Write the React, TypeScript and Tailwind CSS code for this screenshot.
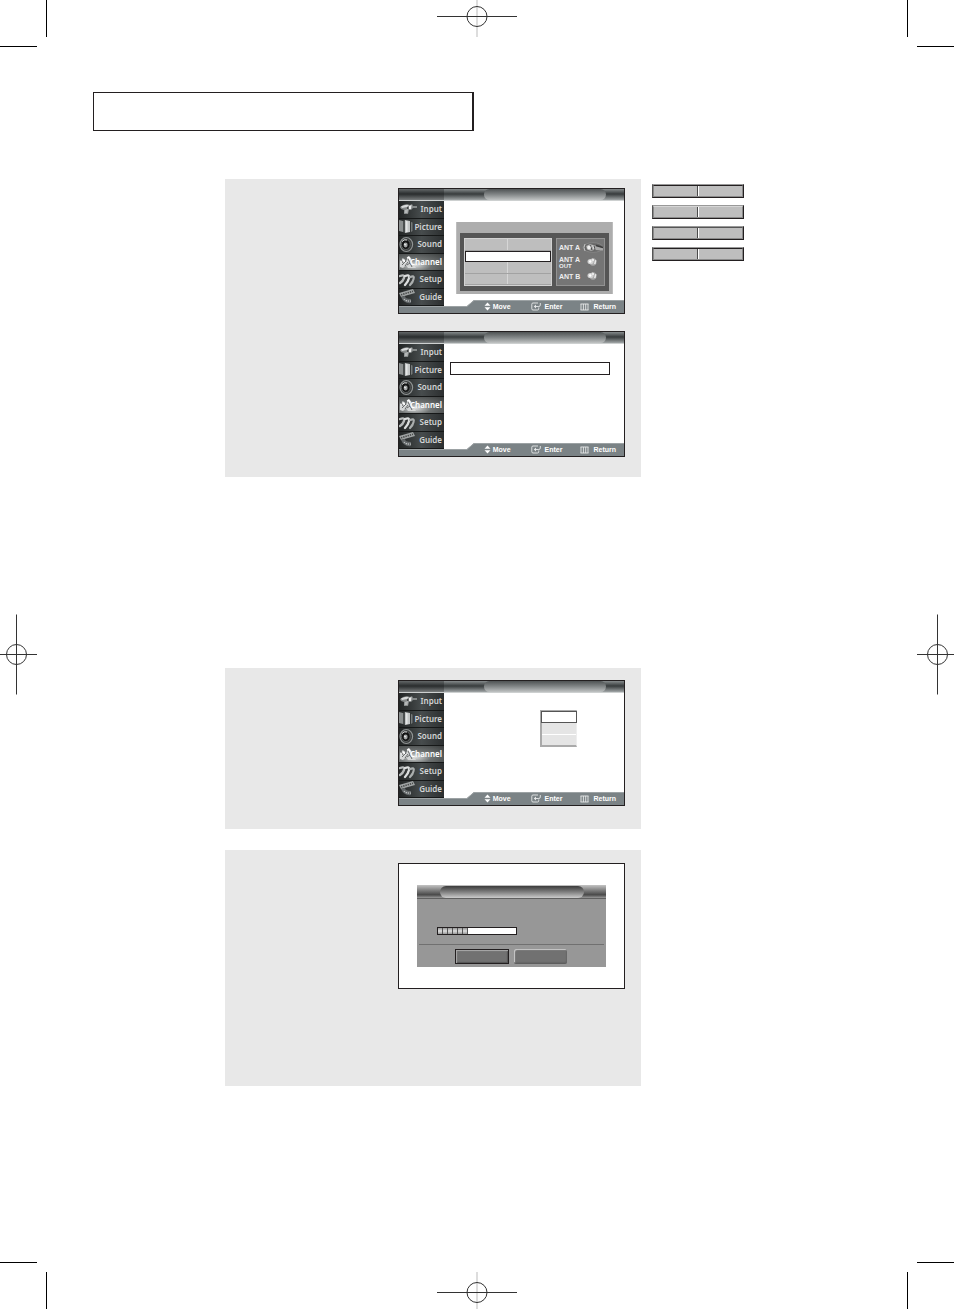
import type { ReactNode } from "react";
import clsx from "clsx";

const menu = ["Input", "Picture", "Sound", "Channel", "Setup", "Guide"];

function MenuIcon({ name }: { name: string }) {
  switch (name) {
    case "Input":
      return (
        <svg width="20" height="17" viewBox="0 0 20 17" className="shrink-0">
          <path d="M1 6 L4 4 L8 3 L11 4 L13 3 L14 5 L18 5 L18 7 L14 7 L12 9 L10 9 L9 13 L5 13 L5 9 L2 8 Z" fill="#858989" />
          <path d="M2 5.5 L6 4 L10 4 L8 6 L3 7 Z" fill="#d8dada" />
          <path d="M6 9 L9 8 L8.5 12 L5.5 12 Z" fill="#b4b7b7" />
          <path d="M10 5 L12.5 4 L12 8 L10 8 Z" fill="#eceded" />
          <path d="M8 6 L10 7 L8 8 Z" fill="#2c2e2e" />
        </svg>
      );
    case "Picture":
      return (
        <svg width="20" height="17" viewBox="0 0 20 17" className="shrink-0">
          <path d="M0 2 L4 3 L4 14 L0 13 Z" fill="#8b8f8f" />
          <path d="M4 3 L6 2 L6 15 L4 14 Z" fill="#4c5050" />
          <path d="M6 2 L11 3 L11 14 L6 15 Z" fill="#c3c6c6" />
          <path d="M7 3 L8.5 3.3 L8.5 14 L7 14.3 Z" fill="#e4e6e6" />
          <path d="M12 4 L13.5 4.5 V13 L12 14 Z" fill="#767a7a" />
        </svg>
      );
    case "Sound":
      return (
        <svg width="20" height="17" viewBox="0 0 20 17" className="shrink-0">
          <ellipse cx="7.3" cy="8.5" rx="6.3" ry="7" fill="#3a3d3d" stroke="#8f9393" strokeWidth="1.2" />
          <ellipse cx="6.8" cy="8.5" rx="4.4" ry="5" fill="#131414" stroke="#5e6262" strokeWidth="1" />
          <ellipse cx="6.6" cy="9" rx="2" ry="2.4" fill="#a2a5a5" />
          <path d="M3 5.5 Q5 3 8 4" stroke="#d5d7d7" strokeWidth="1" fill="none" />
          <path d="M5 8 L7 9" stroke="#f0f1f1" strokeWidth="1" />
        </svg>
      );
    case "Channel":
      return (
        <svg width="20" height="17" viewBox="0 0 20 17" className="shrink-0">
          <path d="M1 8 L4 5 L7 9 L9 3 L12 5 L13 9 L17 15 L9 15 L7 12 L4 15 L1 14 Z" fill="#d5d7d7" />
          <path d="M2 9 L5 7 L6 10 M8 5 L10 4 L11 7" stroke="#fff" strokeWidth="1.2" fill="none" />
          <path d="M3 12 L7 8 M9 6 L13 14 M6 13 L9 9 M2 6 L4 10 M11 10 L8 12" stroke="#4b4e4e" strokeWidth=".8" />
        </svg>
      );
    case "Setup":
      return (
        <svg width="20" height="17" viewBox="0 0 20 17" className="shrink-0">
          <g fill="none" strokeLinecap="round">
            <path d="M1 5 Q6 3 5 7 Q4 10 1 12" stroke="#b8bbbb" strokeWidth="2.4" />
            <path d="M6 5 Q11 3 10 7 Q9 11 6 14" stroke="#dcdede" strokeWidth="2.4" />
            <path d="M11 6 Q16 4 14.5 8 Q14 11 11 14" stroke="#aaaeae" strokeWidth="2.2" />
            <path d="M3 7 L1 10 M8 7 L6 11 M13 8 L11 11" stroke="#3d4040" strokeWidth=".9" />
          </g>
        </svg>
      );
    default:
      return (
        <svg width="20" height="17" viewBox="0 0 20 17" className="shrink-0">
          <path d="M0 5 L14 1 L16 5 L2 9 Z" fill="#a0a4a4" />
          <path d="M2 6.8 L14 3.2" stroke="#484b4b" strokeWidth="1.6" strokeDasharray="1.4 .9" />
          <path d="M2 9 L6 8 Q6 11 12 11 L12 15 Q5 16 2 9 Z" fill="#63686a" />
          <path d="M5 11 Q7 13.5 12 13" stroke="#c2c5c5" strokeWidth="1.2" strokeDasharray="1.3 .9" fill="none" />
        </svg>
      );
  }
}

function TitleBar() {
  return (
    <div className="flex h-3 shrink-0 border-b border-[#cdd0d0] bg-linear-to-b from-[#7d8283] from-5% via-[#383c3d] via-45% to-[#a2a7a8]">
      <div className="w-[45px] shrink-0 bg-black/25" />
      <div className="ml-10 h-[11px] w-[122px] rounded-full bg-linear-to-b from-[#4f5354] via-[#838788] to-[#c0c3c3]" />
    </div>
  );
}

function Hints() {
  return (
    <div className="absolute inset-x-0 bottom-0 h-[13px] font-['Liberation_Sans',sans-serif] text-[7px] font-bold leading-[13px] text-white">
      <svg className="absolute inset-0 h-full w-full" viewBox="0 0 225 13" preserveAspectRatio="none">
        <path d="M0 6 H68 L75 0 H225 V13 H0 Z" fill="#7b8386" />
        <path d="M0 6.5 H68 L75 .5 H225" stroke="#9ca2a4" fill="none" />
      </svg>
      <div className="relative flex items-center justify-end pr-2">
        <span className="flex items-center gap-0.5">
          <svg width="7" height="9" viewBox="0 0 7 9" fill="#fff">
            <path d="M3.5 .5 L6.5 3.7 H.5 Z M3.5 8.5 L6.5 5.3 H.5 Z" />
          </svg>
          Move
        </span>
        <span className="ml-5 flex items-center gap-1">
          <svg width="10" height="9" viewBox="0 0 10 9" fill="none" stroke="#e8eaea">
            <path d="M7 1 H2 Q.8 1 .8 2.2 V6.8 Q.8 8 2 8 H6.5 Q7.7 8 7.7 6.8 V5.5" strokeWidth=".9" />
            <path d="M9.3 1 V3 Q9.3 4.5 7.8 4.5 H3.5" strokeWidth=".9" />
            <path d="M5 2.5 V6.5 L2.8 4.5 Z" fill="#e8eaea" stroke="none" />
          </svg>
          Enter
        </span>
        <span className="ml-[18px] flex items-center gap-1">
          <svg width="9" height="8" viewBox="0 0 9 8" fill="none" stroke="#e8eaea">
            <path d="M.5 1 H8.5 M.5 7 H8.5 M1 1 V7 M3.4 1 V7 M5.7 1 V7 M8 1 V7" strokeWidth=".9" />
          </svg>
          Return
        </span>
      </div>
    </div>
  );
}

function Screen({ children }: { children: ReactNode }) {
  return (
    <div className="relative flex h-[126px] w-[227px] shrink-0 flex-col border border-[#231f20] bg-white">
      <TitleBar />
      <div className="flex flex-1">
        <nav className="grid h-[105px] w-[45px] shrink-0 grid-rows-6 bg-[#2b2e2e]">
          {menu.map((item) => (
            <button
              key={item}
              type="button"
              className={clsx(
                "relative flex min-h-0 items-center overflow-hidden border-b border-[#161818] font-['Noto_Sans',sans-serif] text-[8px] font-semibold leading-none",
                item === "Channel"
                  ? "bg-radial-[at_35%_70%] from-[#dfe1e1] via-[#6f7373] via-40% to-[#3a3d3d] text-white"
                  : "bg-linear-to-r from-[#222525] via-[#474c4d] to-[#2c2f30] text-[#d3d5d5]"
              )}
            >
              <MenuIcon name={item} />
              <span className="absolute inset-y-0 right-0.5 flex items-center">{item}</span>
            </button>
          ))}
        </nav>
        <div className="min-w-0 flex-1">{children}</div>
      </div>
      <Hints />
    </div>
  );
}

function Jack() {
  return (
    <svg width="12" height="10" viewBox="0 0 12 10">
      <ellipse cx="7" cy="5" rx="3.5" ry="3.8" fill="#a8a8a8" />
      <ellipse cx="4.5" cy="4.5" rx="3" ry="2.6" fill="#d2d2d2" />
      <path d="M6 1.5 L8 2 L8 4 L6 4 Z M9 3 L10.5 3.5 L9.5 7 L8 7 Z" fill="#e8e8e8" />
      <circle cx="4.2" cy="4.5" r="1.2" fill="#fff" />
    </svg>
  );
}

function Plug() {
  return (
    <svg width="22" height="11" viewBox="0 0 22 11">
      <ellipse cx="11" cy="5.5" rx="10" ry="4.8" fill="#666" stroke="#8a8a8a" strokeWidth=".8" />
      <path d="M3 2 Q1 5.5 3 9" stroke="#c4c4c4" strokeWidth="1" fill="none" />
      <path d="M4 4 L8 2 L13 3.5 L21 6 L21 8.5 L12 8 L9 9 L5 7.5 Z" fill="#a9a9a9" />
      <path d="M8 3 L10 8 M12 4 L13 8" stroke="#444" strokeWidth="1" />
      <ellipse cx="7" cy="5.5" rx="1.8" ry="2" fill="#efefef" />
      <path d="M10.5 3.5 L12 7" stroke="#ddd" strokeWidth="1" />
      <path d="M14 3.5 L21 5.5" stroke="#3c3c3c" strokeWidth="1.4" />
    </svg>
  );
}

function AntennaPanel() {
  return (
    <div className="ml-3 mt-[21px] h-[72px] w-[157px] border-x border-[#bdbdbd] bg-[#adadad] px-[3px] pt-[11px]">
      <div className="flex h-[58px] gap-1 bg-[#555] px-1 py-[5px]">
        <div className="grid w-[88px] grid-rows-4 border border-[#d2d2d2] bg-[#bebebe]">
          {[0, 1, 2, 3].map((row) =>
            row === 1 ? (
              <div key={row} className="border border-[#231f20] bg-white" />
            ) : (
              <div key={row} className="grid grid-cols-2 border-b border-[#a2a2a2]">
                <div className="border-r border-[#d6d6d6]" />
              </div>
            )
          )}
        </div>
        <div className="flex flex-1 flex-col justify-between border border-[#929292] bg-[#757575] pb-1 pl-0.5 pt-[3px] font-['Liberation_Sans',sans-serif] text-[7px] font-bold leading-none text-[#eee]">
          <div className="flex items-center justify-between">
            ANT A
            <Plug />
          </div>
          <div className="flex items-center justify-between pr-1.5">
            <span>
              ANT A
              <span className="block text-[6px]">OUT</span>
            </span>
            <Jack />
          </div>
          <div className="flex items-center justify-between pr-1.5">
            ANT B
            <Jack />
          </div>
        </div>
      </div>
    </div>
  );
}

function SearchDialog() {
  return (
    <div className="flex h-[126px] w-[227px] shrink-0 flex-col border border-[#231f20] bg-white px-[18px] pt-[21px]">
      <div className="h-[82px] bg-[#979797]">
        <div className="flex h-3.5 justify-center border-b border-[#606060] bg-linear-to-b from-[#c4c4c4] via-[#4a4a4a] via-75% to-[#9a9a9a] pt-px">
          <div className="h-3 w-36 rounded-full bg-linear-to-b from-[#3c3c3c] via-[#808080] to-[#ccc]" />
        </div>
        <div className="ml-5 mt-7 flex h-2 w-20 border border-[#231f20] bg-white">
          <div className="flex gap-px bg-[#555] pr-px">
            {[0, 1, 2, 3, 4, 5].map((n) => (
              <span key={n} className="w-1 bg-linear-to-b from-[#999] via-[#ddd] to-[#999]" />
            ))}
          </div>
        </div>
        <div className="mx-0.5 mt-[9px] border-t border-[#707070]" />
        <div className="mt-1 flex gap-[5px] pl-[38px]">
          <button
            type="button"
            aria-label="Stop"
            className="h-[15px] w-[54px] border border-[#231f20] bg-[#717171] shadow-[inset_1px_1px_1px_#aaa,inset_-1px_-1px_1px_#555]"
          />
          <button
            type="button"
            aria-label="Cancel"
            className="h-[15px] w-[53px] rounded-xs border-b border-[#5d5d5d] bg-[#717171] shadow-[inset_1px_1px_1px_#ccc,inset_-1px_-1px_1px_#666]"
          />
        </div>
      </div>
    </div>
  );
}

function KeyRow({ tone = "dark" }: { tone?: "dark" | "mid" | "light" }) {
  return (
    <div className="border-l border-t border-l-[#555] border-t-[#999] border-b border-b-[#231f20] border-r border-r-[#231f20]">
      <div
        className={clsx(
          "grid h-3 grid-cols-2 border border-b-[#8a8a8a] border-l-[#8a8a8a] border-r-[#8a8a8a] bg-[#bebebe]",
          tone === "dark" && "border-t-[#231f20]",
          tone === "mid" && "border-t-[#555]",
          tone === "light" && "border-t-[#d6d6d6]"
        )}
      >
        <div className="border-r border-[#4a4a4a]" />
        <div className="border-l border-white" />
      </div>
    </div>
  );
}

function CornerMark({ className }: { className?: string }) {
  return (
    <svg width="47" height="47" viewBox="0 0 47 47" className={className}>
      <path d="M46.5 0 V37 M0 46.5 H37" stroke="#000" />
    </svg>
  );
}

interface MarkProps {
  viewBox: string;
  width: number;
  height: number;
  pale?: boolean;
}

function RegistrationMark({ viewBox, width, height, pale }: MarkProps) {
  return (
    <svg viewBox={viewBox} width={width} height={height} fill="none" stroke="#333">
      <path d="M0 -40 V40" stroke={pale ? "#ddd" : "#333"} strokeWidth={pale ? 2 : 1} />
      <circle cx="0" cy="0" r="10" />
      <path d="M-40 0 H40" />
    </svg>
  );
}

export default function App() {
  return (
    <div className="flex min-h-screen flex-col bg-white">
      <header className="flex h-[47px] items-start justify-between">
        <CornerMark />
        <RegistrationMark viewBox="-40 -16.5 80 37" width={80} height={37} pale />
        <CornerMark className="-scale-x-100" />
      </header>

      <div className="flex flex-1">
        <div className="flex w-[47px] shrink-0 items-center">
          <RegistrationMark viewBox="-16.5 -40.5 37 81" width={37} height={81} />
        </div>

        <main className="min-w-0 flex-1">
          <div className="ml-[46px] mt-[45px] h-[39px] w-[381px] max-w-full border border-r-2 border-[#231f20]" />

          <div className="-mr-[47px] ml-[178px] mt-12 grid grid-cols-[416fr_313fr] items-start">
            <section className="flex flex-col items-end gap-[17px] bg-[#e8e8e8] pb-5 pr-4 pt-[9px]">
              <Screen>
                <AntennaPanel />
              </Screen>
              <Screen>
                <div className="ml-1.5 mt-[18px] h-[13px] w-40 border border-[#231f20]" />
              </Screen>
            </section>
            <aside className="ml-[11px] mt-[5px] flex w-[92px] flex-col gap-[7px]">
              <KeyRow />
              <KeyRow tone="light" />
              <KeyRow tone="mid" />
              <KeyRow />
            </aside>

            <section className="mt-[191px] flex justify-end bg-[#e8e8e8] pb-[23px] pr-4 pt-3">
              <Screen>
                <div className="ml-24 mt-[17px] grid h-[37px] w-[37px] grid-rows-3 gap-px border-2 border-r border-[#aaa] border-r-[#eee] bg-white">
                  <div className="-m-px border border-[#555] bg-white" />
                  <div className="bg-[#e5e5e5]" />
                  <div className="bg-[#e5e5e5]" />
                </div>
              </Screen>
            </section>

            <section className="col-start-1 mt-[21px] flex min-h-[236px] items-start justify-end bg-[#e8e8e8] pr-4 pt-[13px]">
              <SearchDialog />
            </section>
          </div>
        </main>

        <div className="flex w-[47px] shrink-0 items-center justify-end">
          <RegistrationMark viewBox="-20.5 -40.5 37 81" width={37} height={81} />
        </div>
      </div>

      <footer className="flex h-[47px] items-end justify-between">
        <CornerMark className="-scale-y-100" />
        <RegistrationMark viewBox="-40 -20.5 80 37" width={80} height={37} pale />
        <CornerMark className="-scale-100" />
      </footer>
    </div>
  );
}
